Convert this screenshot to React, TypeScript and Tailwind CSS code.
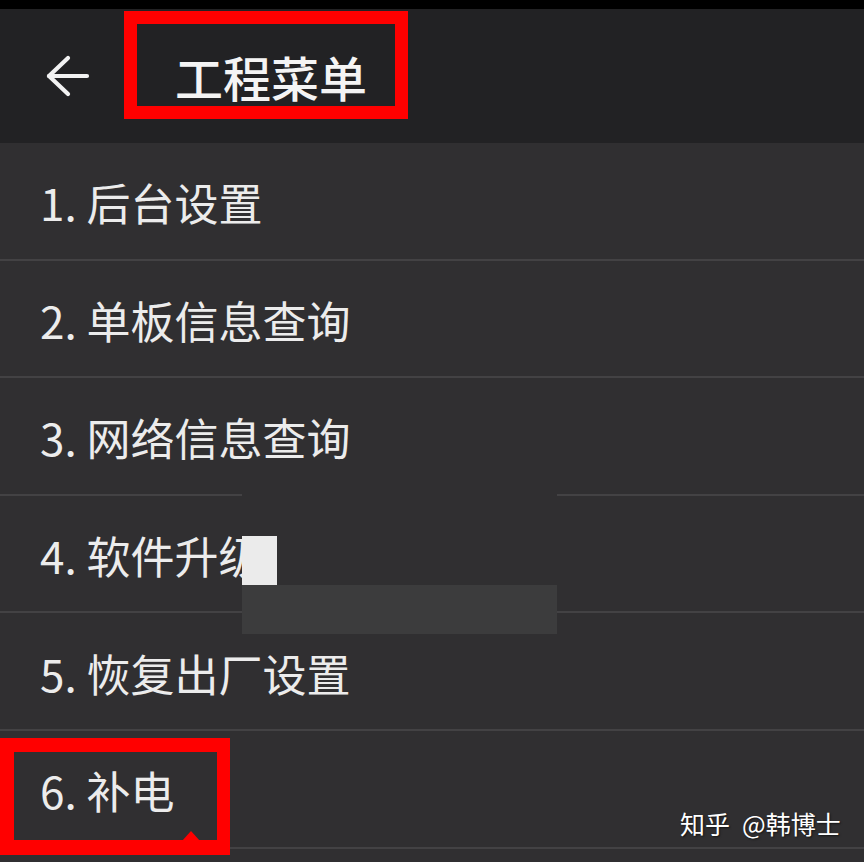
import React from "react";

const items = [
  "1. 后台设置",
  "2. 单板信息查询",
  "3. 网络信息查询",
  "4. 软件升级",
  "5. 恢复出厂设置",
  "6. 补电",
];

export default function App() {
  return (
    <div className="relative w-[864px] h-[862px] overflow-hidden bg-[#302f31] font-['Noto_Sans_CJK_SC','Noto_Sans',sans-serif]">
      <div className="h-[9px] bg-black" />
      <header className="h-[134px] bg-[#222224] flex items-center">
        <svg
          width="48"
          height="44"
          viewBox="0 0 48 44"
          className="ml-[44px]"
          fill="none"
          stroke="#f2f2f2"
          strokeWidth="4.2"
          strokeLinecap="round"
          strokeLinejoin="round"
        >
          <path d="M5 22 L43 22" />
          <path d="M24 4 L5 22 L24 40" />
        </svg>
        <h1 className="ml-[83px] text-[48px] leading-none font-medium text-[#f4f4f4]">
          工程菜单
        </h1>
      </header>
      <div className="flex flex-col">
        {items.map((t) => (
          <div key={t} className="flex flex-col">
            <div className="h-[115.6px] flex items-center pl-[40px] pt-[3px] text-[44px] leading-none text-[#ececec]">
              {t}
            </div>
            <div className="h-[2px] bg-[#434244]" />
          </div>
        ))}
      </div>

      {/* title highlight */}
      <div className="absolute left-[124px] top-[11px] w-[284px] h-[108px] border-[13px] border-[#ff0000]" />

      {/* item 6 highlight */}
      <div className="absolute left-0 top-[738px] w-[230px] h-[117px] border-l-[14px] border-t-[14px] border-r-[13px] border-b-[15px] border-[#ff0000]" />
      <svg className="absolute left-[182px] top-[829px]" width="18" height="12" viewBox="0 0 18 12">
        <path d="M0 12 L9 2 L18 12 Z" fill="#ff0000" />
      </svg>

      {/* redacted patch */}
      <div className="absolute left-[242px] top-[488px] w-[315px] h-[97px] bg-[#302f31]" />
      <div className="absolute left-[242px] top-[585px] w-[315px] h-[49px] bg-[#3c3c3d]" />
      <div className="absolute left-[242px] top-[536px] w-[35px] h-[49px] bg-[#ebebeb]" />

      {/* watermark */}
      <div className="absolute left-[680px] top-[811px] flex gap-[12px] text-[25px] leading-none text-white [text-shadow:1px_1px_2px_rgba(0,0,0,0.6)] whitespace-nowrap">
        <span>知乎</span>
        <span>@韩博士</span>
      </div>
    </div>
  );
}
